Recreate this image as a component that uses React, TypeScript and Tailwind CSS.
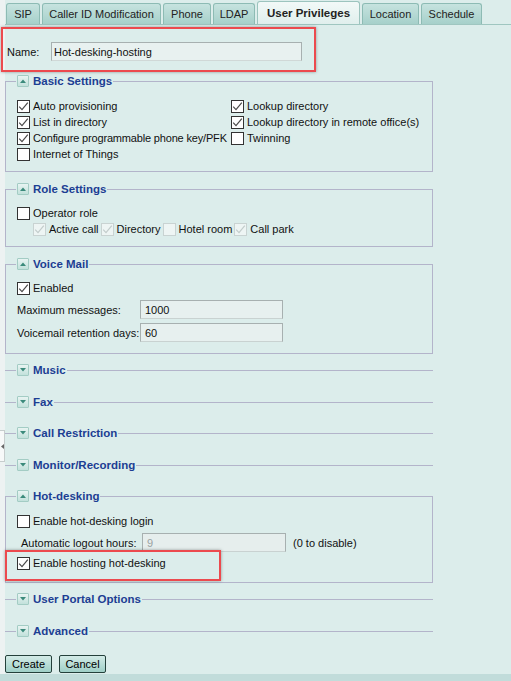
import React from "react";

function Box({ checked, disabled }: { checked?: boolean; disabled?: boolean }) {
  return (
    <span
      className={`w-[13px] h-[13px] shrink-0 border flex items-center justify-center ${
        disabled ? "border-[#c9d3d2] bg-[#eef5f4]" : "border-[#333333] bg-white"
      }`}
    >
      {checked && (
        <svg width="11" height="11" viewBox="0 0 11 11">
          <path
            d="M1.2 5.6 L4 8.6 L9.8 1.6"
            fill="none"
            stroke={disabled ? "#c2cccb" : "#4a4a4a"}
            strokeWidth="1.2"
          />
        </svg>
      )}
    </span>
  );
}

function Check({
  label,
  checked,
  disabled,
  textClass,
}: {
  label: string;
  checked?: boolean;
  disabled?: boolean;
  textClass?: string;
}) {
  return (
    <div className="flex items-center gap-[3px] h-[16px] whitespace-nowrap">
      <Box checked={checked} disabled={disabled} />
      <span className={`text-[#111111] ${textClass ?? ""}`}>{label}</span>
    </div>
  );
}

function Toggle({ open }: { open?: boolean }) {
  return (
    <span className="w-[12px] h-[12px] border border-[#a3ccc4] rounded-[1px] bg-linear-to-b from-[#e8f4f2] to-[#c2e1db] flex items-center justify-center">
      <svg width="6" height="4" viewBox="0 0 6 4">
        <path d={open ? "M0 4 L3 0.5 L6 4Z" : "M0 0 L3 3.5 L6 0Z"} fill="#3b8a7b" />
      </svg>
    </span>
  );
}

function Section({
  title,
  open,
  className,
  children,
}: {
  title: string;
  open?: boolean;
  className: string;
  children?: React.ReactNode;
}) {
  return (
    <fieldset
      className={`${
        open ? "border border-[#b3b4ca] px-[11px]" : "border-0 border-t border-[#b3b4ca] pl-[12px]"
      } min-w-0 ${className}`}
    >
      <legend className="-ml-[1px] px-[1px] h-[16px]">
        <div className="flex items-center gap-[4px] h-[16px]">
          <Toggle open={open} />
          <span className="text-[11.5px] font-bold text-[#1c3e93] leading-[16px]">{title}</span>
        </div>
      </legend>
      {children}
    </fieldset>
  );
}

function Field({ value, width, disabled }: { value: string; width: string; disabled?: boolean }) {
  return (
    <div
      className={`${width} h-[19px] border border-[#a7b0b0] border-b-[#c9d2d1] flex items-center pl-[4px] ${
        disabled ? "bg-[#e6eeed] text-[#9aa2a2]" : "bg-[#e7f0ef] text-[#111111]"
      }`}
    >
      {value}
    </div>
  );
}

const tabs = [
  { label: "SIP", w: "w-[34px]" },
  { label: "Caller ID Modification", w: "w-[119px]" },
  { label: "Phone", w: "w-[48px]" },
  { label: "LDAP", w: "w-[42px]" },
  { label: "User Privileges", w: "w-[103px]", active: true },
  { label: "Location", w: "w-[57px]" },
  { label: "Schedule", w: "w-[61px]" },
];

export default function App() {
  return (
    <div className="w-[511px] h-[681px] bg-[#dcedeb] flex flex-col relative overflow-hidden font-['Liberation_Sans',Arial,sans-serif] text-[11px] leading-[16px] text-[#111111]">
      <div className="flex flex-1">
        <div className="w-[5px] bg-[#edf2f2] flex flex-col">
          <div className="mt-[430px] h-[32px] bg-[#f7f9f9] border-y border-r border-[#c6cdcd] flex items-center justify-center">
            <svg width="3" height="5" viewBox="0 0 3 5">
              <path d="M3 0 L0 2.5 L3 5Z" fill="#666" />
            </svg>
          </div>
        </div>
        <div className="flex-1 flex flex-col">
          {/* tabs */}
          <div className="h-[25px] border-b border-[#9fc6c0] flex items-end gap-[2px] pl-[1px]">
            {tabs.map((t) =>
              t.active ? (
                <div
                  key={t.label}
                  className={`${t.w} h-[23px] border border-b-0 border-[#9cc4be] rounded-t-[3px] bg-linear-to-b from-[#f2f9f8] to-[#e0efed] flex items-center justify-center font-bold text-[11.5px] text-[#222]`}
                >
                  {t.label}
                </div>
              ) : (
                <div
                  key={t.label}
                  className={`${t.w} h-[21px] border border-b-0 border-[#8dbbb4] rounded-t-[3px] bg-linear-to-b from-[#c6e3df] to-[#a6d0ca] flex items-center justify-center text-[#222]`}
                >
                  {t.label}
                </div>
              )
            )}
          </div>

          {/* name */}
          <div className="mt-[17px] h-[19px] flex items-center pl-[2px]">
            <span className="w-[44px]">Name:</span>
            <div className="w-[251px] h-[19px] border border-[#a7b0b0] border-b-[#d0d8d7] bg-[#e8f1f0] flex items-center pl-[2px]">
              Hot-desking-hosting
            </div>
          </div>

          {/* form */}
          <div className="w-[428px] flex flex-col">
            <Section title="Basic Settings" open className="mt-[12px] pt-[9px] pb-[9px]">
              <div className="grid grid-cols-[214px_1fr]">
                <Check label="Auto provisioning" checked />
                <Check label="Lookup directory" checked />
                <Check label="List in directory" checked />
                <Check label="Lookup directory in remote office(s)" checked />
                <Check label="Configure programmable phone key/PFK" checked textClass="tracking-[-0.17px]" />
                <Check label="Twinning" />
                <Check label="Internet of Things" />
                <div />
              </div>
            </Section>

            <Section title="Role Settings" open className="mt-[9px] pt-[8px] pb-[9px]">
              <Check label="Operator role" />
              <div className="flex items-center gap-[2px] pl-[16px]">
                <Check label="Active call" checked disabled />
                <Check label="Directory" checked disabled />
                <Check label="Hotel room" disabled />
                <Check label="Call park" checked disabled />
              </div>
            </Section>

            <Section title="Voice Mail" open className="mt-[9px] pt-[8px] pb-[11px]">
              <Check label="Enabled" checked />
              <div className="mt-[4px] flex items-center">
                <span className="w-[123px]">Maximum messages:</span>
                <Field value="1000" width="w-[143px]" />
              </div>
              <div className="mt-[4px] flex items-center">
                <span className="w-[123px]">Voicemail retention days:</span>
                <Field value="60" width="w-[143px]" />
              </div>
            </Section>

            <Section title="Music" className="mt-[8px]" />
            <Section title="Fax" className="mt-[16px]" />
            <Section title="Call Restriction" className="mt-[15px]" />
            <Section title="Monitor/Recording" className="mt-[16px]" />

            <Section title="Hot-desking" open className="mt-[15px] pt-[9px] pb-[11px]">
              <Check label="Enable hot-desking login" />
              <div className="mt-[4px] flex items-center pl-[4px]">
                <span className="w-[121px]">Automatic logout hours:</span>
                <Field value="9" width="w-[144px]" disabled />
                <span className="ml-[7px]">(0 to disable)</span>
              </div>
              <div className="mt-[3px]">
                <Check label="Enable hosting hot-desking" checked />
              </div>
            </Section>

            <Section title="User Portal Options" className="mt-[8px]" />
            <Section title="Advanced" className="mt-[16px]" />
          </div>

          {/* buttons */}
          <div className="mt-[16px] flex gap-[7px]">
            <button className="w-[47px] h-[18px] border border-[#24403b] rounded-[2px] bg-linear-to-b from-[#d3ebe7] to-[#9fcfc7] text-[11px] leading-[16px] text-black flex items-center justify-center">
              Create
            </button>
            <button className="w-[47px] h-[18px] border border-[#24403b] rounded-[2px] bg-linear-to-b from-[#d3ebe7] to-[#9fcfc7] text-[11px] leading-[16px] text-black flex items-center justify-center">
              Cancel
            </button>
          </div>
        </div>
      </div>
      <div className="h-[7px] bg-[#c1dcda]" />

      {/* annotation boxes */}
      <div className="absolute left-[1px] top-[27px] w-[315px] h-[45px] border-2 border-[#ec4a4e] shadow-[0_0_3px_rgba(0,0,0,0.35)] pointer-events-none" />
      <div className="absolute left-[5px] top-[550px] w-[216px] h-[31px] border-2 border-[#ec4a4e] shadow-[0_0_3px_rgba(0,0,0,0.35)] pointer-events-none" />
    </div>
  );
}
